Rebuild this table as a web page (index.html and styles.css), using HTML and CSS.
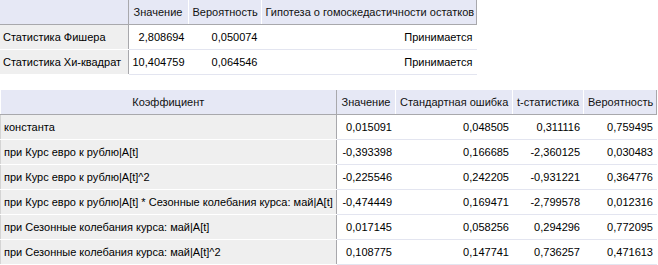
FILE: index.html
```html
<!DOCTYPE html>
<html>
<head>
<meta charset="utf-8">
<link rel="stylesheet" href="styles.css">
</head>
<body>
<table class="grid t1">
  <colgroup><col class="c128"><col class="c60"><col class="c73"><col class="c215"></colgroup>
  <thead>
    <tr><th class="first"></th><th>Значение</th><th>Вероятность</th><th class="last">Гипотеза о гомоскедастичности остатков</th></tr>
  </thead>
  <tbody>
    <tr><td class="first">Статистика Фишера</td><td>2,808694</td><td>0,050074</td><td>Принимается</td></tr>
    <tr><td class="first">Статистика Хи-квадрат</td><td>10,404759</td><td>0,064546</td><td>Принимается</td></tr>
  </tbody>
</table>
<table class="grid t2">
  <colgroup><col class="c336"><col class="c59"><col class="c117"><col class="c71"><col class="c73"></colgroup>
  <thead>
    <tr><th class="first center">Коэффициент</th><th>Значение</th><th>Стандартная ошибка</th><th>t-статистика</th><th class="last">Вероятность</th></tr>
  </thead>
  <tbody>
    <tr><td class="first">константа</td><td>0,015091</td><td>0,048505</td><td>0,311116</td><td>0,759495</td></tr>
    <tr><td class="first">при Курс евро к рублю|A[t]</td><td>-0,393398</td><td>0,166685</td><td>-2,360125</td><td>0,030483</td></tr>
    <tr><td class="first">при Курс евро к рублю|A[t]^2</td><td>-0,225546</td><td>0,242205</td><td>-0,931221</td><td>0,364776</td></tr>
    <tr><td class="first">при Курс евро к рублю|A[t] * Сезонные колебания курса: май|A[t]</td><td>-0,474449</td><td>0,169471</td><td>-2,799578</td><td>0,012316</td></tr>
    <tr><td class="first">при Сезонные колебания курса: май|A[t]</td><td>0,017145</td><td>0,058256</td><td>0,294296</td><td>0,772095</td></tr>
    <tr><td class="first">при Сезонные колебания курса: май|A[t]^2</td><td>0,108775</td><td>0,147741</td><td>0,736257</td><td>0,471613</td></tr>
  </tbody>
</table>
</body>
</html>
```
FILE: styles.css
```css
html, body {
  margin: 0;
  padding: 0;
  background: #fff;
}
body {
  font-family: "Liberation Sans", Arial, sans-serif;
  font-size: 11px;
  color: #000;
}
.grid {
  border-collapse: collapse;
  table-layout: fixed;
}
.t1 { width: 476px; }
.t2 { width: 656px; margin-top: 15px; }
.c128 { width: 128px; }
.c60 { width: 60px; }
.c73 { width: 73px; }
.c215 { width: 215px; }
.c336 { width: 336px; }
.c59 { width: 59px; }
.c117 { width: 117px; }
.c71 { width: 71px; }
.grid th {
  height: 24px;
  padding: 0 4px;
  background: #e6e8f5;
  font-weight: normal;
  color: #111;
  text-align: center;
  white-space: nowrap;
  overflow: hidden;
  border-bottom: 1px solid #a8a8ac;
  border-right: 1px solid #fff;
}
.grid th.first {
  border-right: 1px solid #a8a8ac;
}
.grid th.last {
  border-right: 1px solid #a8a8ac;
}
.grid td {
  height: 24px;
  padding: 0 3px 0 3px;
  text-align: right;
  white-space: nowrap;
  overflow: hidden;
  border-bottom: 1px solid #e3e5f0;
  border-right: 1px solid #fff;
}
.grid td.first {
  text-align: left;
  background: #efefef;
  border-bottom: 1px solid #fff;
  border-right: 1px solid #a8a8ac;
}
.t2 td.first {
  border-left: 1px solid #d4d4d4;
}
```
